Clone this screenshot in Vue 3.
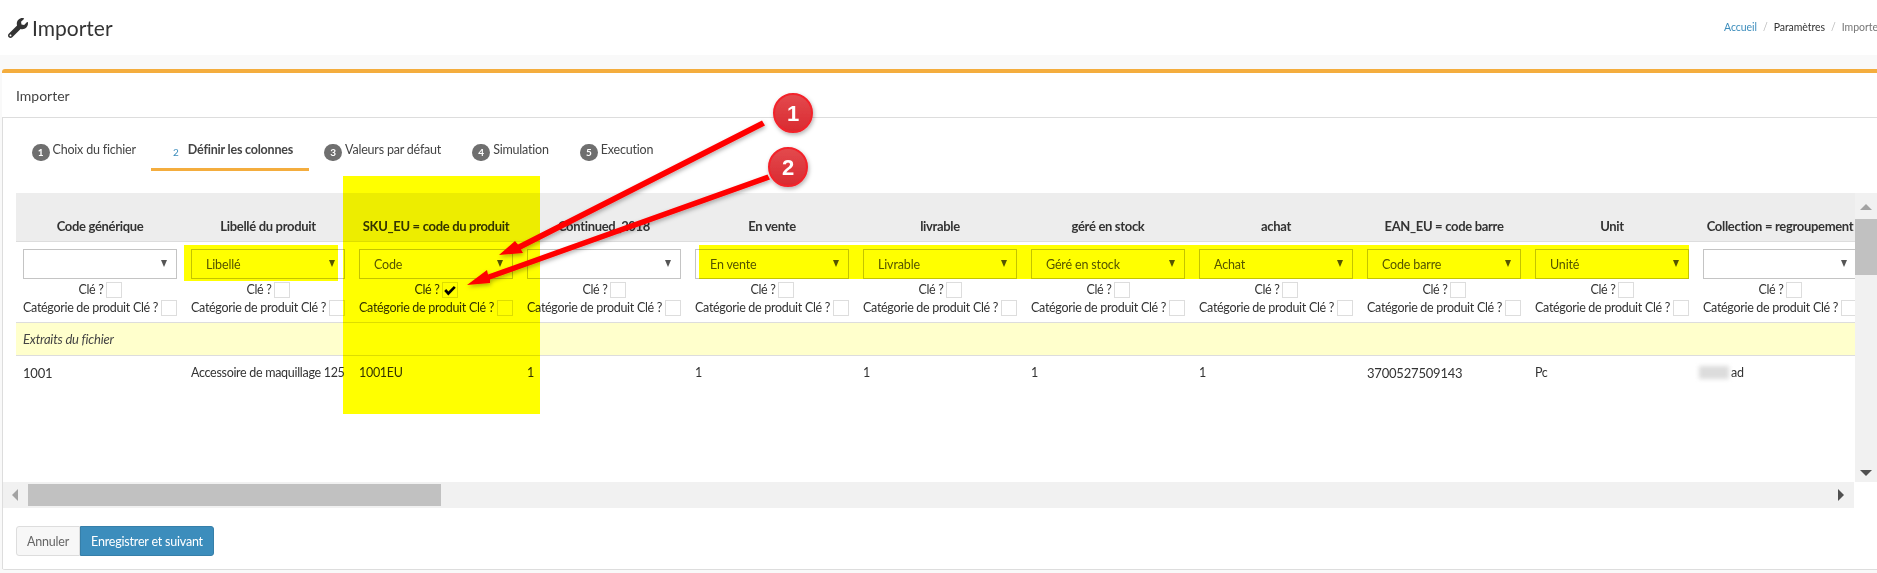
<script setup>
const tabs = [
  { n: 1, label: 'Choix du fichier' },
  { n: 2, label: 'Définir les colonnes', active: true },
  { n: 3, label: 'Valeurs par défaut' },
  { n: 4, label: 'Simulation' },
  { n: 5, label: 'Execution' },
]
const columns = [
  { head: 'Code générique', value: '', cell: '1001', digits: true },
  { head: 'Libellé du produit', value: 'Libellé', cell: 'Accessoire de maquillage 125' },
  { head: 'SKU_EU = code du produit', value: 'Code', cell: '1001EU', key: true },
  { head: 'Continued_2018', value: '', cell: '1' },
  { head: 'En vente', value: 'En vente', cell: '1' },
  { head: 'livrable', value: 'Livrable', cell: '1' },
  { head: 'géré en stock', value: 'Géré en stock', cell: '1' },
  { head: 'achat', value: 'Achat', cell: '1' },
  { head: 'EAN_EU = code barre', value: 'Code barre', cell: '3700527509143', digits: true },
  { head: 'Unit', value: 'Unité', cell: 'Pc' },
  { head: 'Collection = regroupement', value: '', cell: 'ad', blur: true },
]
const marks = [
  { left: 343, top: 176, width: 197, height: 238 },
  { left: 184, top: 245, width: 154, height: 36 },
  { left: 699, top: 245, width: 990, height: 34 },
]
</script>

<template>
  <div class="page">
    <header class="top">
      <h1 class="title">
        <svg class="wrench" viewBox="0 0 512 512" width="20" height="20"><path d="M507.730 109.100c-2.240-9.030-13.540-12.090-20.120-5.510l-74.360 74.360-67.880-11.310-11.310-67.880 74.360-74.360c6.620-6.620 3.430-17.900-5.660-20.160-47.380-11.740-99.550.91-136.580 37.930-39.640 39.640-50.550 97.100-34.050 147.200L18.740 402.760c-24.990 24.990-24.990 65.510 0 90.500 24.990 24.990 65.510 24.990 90.500 0l213.210-213.210c50.120 16.710 107.470 5.680 147.370-34.220 37.070-37.070 49.700-89.320 37.910-136.730zM64 472c-13.250 0-24-10.750-24-24 0-13.260 10.750-24 24-24s24 10.740 24 24c0 13.250-10.750 24-24 24z" fill="#333"/></svg>
        <span>Importer</span>
      </h1>
      <nav class="crumbs">
        <a>Accueil</a><i>/</i><b>Paramètres</b><i>/</i><em>Importer</em>
      </nav>
    </header>
    <div class="strip"></div>
    <section class="panel">
      <div class="heading">Importer</div>
      <div class="body">
        <ul class="tabs">
          <li v-for="t in tabs" :key="t.n" :class="['tab', { active: t.active }]">
            <span class="badge">{{ t.n }}</span><span class="tab-label">{{ t.label }}</span>
          </li>
        </ul>
        <div class="scroller">
          <div class="viewport">
            <div class="grid">
              <div v-for="c in columns" :key="c.head" class="col">
                <div class="c-head">{{ c.head }}</div>
                <div class="c-filter">
                  <div class="select"><span>{{ c.value }}</span><i class="caret"></i></div>
                  <div class="line center">Clé ?<span :class="['box', { on: c.key }]"><svg v-if="c.key" viewBox="0 0 16 16" width="14" height="14"><path d="M2.500 8l3.600 4L13.500 4.500" fill="none" stroke="#000" stroke-width="3"/></svg></span></div>
                  <div class="line second">Catégorie de produit Clé ?<span class="box"></span></div>
                </div>
                <div class="c-band"></div>
                <div :class="['c-data', { digits: c.digits }]"><span v-if="c.blur" class="smudge"></span>{{ c.cell }}</div>
              </div>
            </div>
            <div class="extract">Extraits du fichier</div>
          </div>
          <div class="vbar">
            <i class="tri up"></i>
            <div class="vthumb"></div>
            <i class="tri down"></i>
          </div>
        </div>
        <div class="hbar">
          <i class="tri left"></i>
          <div class="hthumb"></div>
          <i class="tri right"></i>
        </div>
        <div class="actions">
          <button class="btn ghost">Annuler</button>
          <button class="btn primary">Enregistrer et suivant</button>
        </div>
      </div>
    </section>
    <div v-for="(m, i) in marks" :key="i" class="mark" :style="{ left: m.left + 'px', top: m.top + 'px', width: m.width + 'px', height: m.height + 'px' }"></div>
    <svg class="arrows" width="1877" height="573" viewBox="0 0 1877 573">
      <defs>
        <filter id="sh" x="-20%" y="-20%" width="140%" height="140%"><feDropShadow dx="1" dy="2" stdDeviation="2" flood-color="#000" flood-opacity=".3"/></filter>
        <linearGradient id="dot" x1="0" y1="0" x2="0" y2="1"><stop offset="0" stop-color="#e34a4e"/><stop offset="1" stop-color="#d92a30"/></linearGradient>
      </defs>
      <g filter="url(#sh)">
        <path d="M762 120.500 L518 244.500 L515 241 L499 255 L523 253 L521 249.500 L765 125.500 Z" fill="#f00"/>
        <path d="M767.500 174.500 L488 274.500 L487 270 L467 285 L490 283 L490 279.500 L770 179.500 Z" fill="#f00"/>
        <circle cx="793" cy="113" r="19" fill="url(#dot)" stroke="#f3222a" stroke-width="2"/>
        <circle cx="788" cy="167" r="19" fill="url(#dot)" stroke="#f3222a" stroke-width="2"/>
      </g>
      <text x="793" y="121" class="num">1</text>
      <text x="788" y="175" class="num">2</text>
    </svg>
  </div>
</template>

<style>
html, body { margin: 0; background: #fff; }
</style>

<style scoped>
.page { position: relative; width: 1877px; height: 573px; overflow: hidden; font-family: "Lato", "Liberation Sans", sans-serif; font-size: 13px; letter-spacing: -0.2px; color: #333; background: #f9f9f9; }
.top { height: 55px; background: #fff; display: flex; justify-content: space-between; align-items: center; padding-left: 8px; }
.title { margin: 0; display: flex; align-items: center; gap: 4px; font-size: 21px; font-weight: 400; letter-spacing: 0; color: #333; }
.wrench { display: block; }
.crumbs { display: flex; width: 153px; flex: none; overflow: hidden; white-space: nowrap; font-size: 10.500px; letter-spacing: -0.05px; margin-top: -1px; }
.crumbs a { color: #3c8dbc; }
.crumbs i { color: #bbb; font-style: normal; margin: 0 6px; }
.crumbs b { font-weight: 400; color: #333; }
.crumbs em { font-style: normal; color: #777; }
.strip { height: 14px; }
.panel { margin-left: 2px; height: 501px; background: #fff; border-top: 4px solid #f4ad3e; border-radius: 3px 0 0 3px; border-bottom: 1px solid #ddd; box-sizing: border-box; display: flex; flex-direction: column; }
.heading { height: 45px; flex: none; box-sizing: border-box; padding: 0 14px; display: flex; align-items: center; color: #444; font-size: 14px; letter-spacing: 0; border-bottom: 1px solid #ddd; }
.body { flex: 1; border-left: 1px solid #ddd; display: flex; flex-direction: column; }
.tabs { list-style: none; margin: 0; padding: 0 0 0 13px; height: 53px; flex: none; display: flex; box-sizing: border-box; }
.tab { height: 53px; box-sizing: border-box; padding: 24px 15.500px 0; display: flex; align-items: flex-start; color: #444; font-size: 12.500px; letter-spacing: -0.2px; line-height: 16px; }
.tab.active { border-bottom: 3px solid #f4ad3e; font-weight: 700; letter-spacing: -0.2px; }
.badge { width: 18px; height: 17px; border-radius: 9px; background: #6f6f6f; color: #fff; font-size: 10px; font-weight: 700; line-height: 17px; text-align: center; margin-right: 3px; margin-top: 2px; flex: none; }
.tab.active .badge { background: none; color: #3c8dbc; font-weight: 400; }
.scroller { margin-top: 22px; height: 289px; flex: none; display: flex; }
.viewport { position: relative; width: 1852px; flex: none; overflow: hidden; padding-left: 13px; box-sizing: border-box; }
.grid { display: flex; width: max-content; position: relative; z-index: 1; }
.col { width: 168px; flex: none; }
.c-head { height: 49px; box-sizing: border-box; padding-top: 24px; line-height: 18px; text-align: center; background: #ededed; border-bottom: 1px solid #ddd; font-weight: 700; letter-spacing: -0.32px; white-space: nowrap; }
.c-filter { height: 81px; box-sizing: border-box; padding: 7px 7px 0; border-bottom: 1px solid #ddd; white-space: nowrap; font-size: 12.500px; letter-spacing: -0.3px; }
.select { height: 30px; box-sizing: border-box; border: 1px solid #c4c4c4; display: flex; align-items: center; justify-content: space-between; padding: 0 9px 0 14px; color: #555; letter-spacing: -0.15px; }
.caret { width: 0; height: 0; margin-top: -2px; border-left: 3.500px solid transparent; border-right: 3.500px solid transparent; border-top: 7px solid #555; }
.line { height: 16px; margin-top: 3px; display: flex; align-items: center; justify-content: space-between; line-height: 16px; }
.line.second { margin-top: 2px; }
.line.center { justify-content: center; }
.box { display: inline-block; flex: none; width: 16px; height: 16px; box-sizing: border-box; border: 1px solid #ddd; background: #fff; margin-left: 2px; }
.box.on svg { display: block; margin: 0; }
.c-band { height: 32px; }
.c-data { height: 34px; padding: 0 7px; display: flex; align-items: center; white-space: nowrap; box-sizing: border-box; border-top: 1px solid #ddd; font-size: 12.500px; letter-spacing: -0.3px; }
.c-data.digits { font-size: 13px; letter-spacing: -0.2px; }
.smudge { display: inline-block; flex: none; width: 30px; height: 13px; background: #dcdcdc; filter: blur(2px); margin: 0 2px 0 -4px; }
.extract { position: absolute; left: 13px; right: 0; top: 130px; height: 32px; box-sizing: border-box; padding-left: 7px; display: flex; align-items: center; background: #ffffcc; font-style: italic; color: #444; }
.vbar { width: 22px; flex: none; background: #f1f1f1; position: relative; }
.vthumb { position: absolute; left: 0; right: 0; top: 26px; height: 56px; background: #c1c1c1; }
.hbar { height: 26px; width: 1851px; flex: none; background: #f1f1f1; position: relative; }
.hthumb { position: absolute; left: 25px; top: 2px; width: 413px; height: 22px; background: #c1c1c1; }
.tri { position: absolute; width: 0; height: 0; }
.tri.up { top: 11px; left: 5px; border-left: 6px solid transparent; border-right: 6px solid transparent; border-bottom: 6px solid #a3a3a3; }
.tri.down { bottom: 6px; left: 5px; border-left: 6px solid transparent; border-right: 6px solid transparent; border-top: 6px solid #505050; }
.tri.left { top: 7px; left: 9px; border-top: 6px solid transparent; border-bottom: 6px solid transparent; border-right: 6px solid #a3a3a3; }
.tri.right { top: 7px; right: 10px; border-top: 6px solid transparent; border-bottom: 6px solid transparent; border-left: 6px solid #505050; }
.actions { display: flex; padding: 18px 0 0 13px; }
.btn { height: 30px; box-sizing: border-box; font: inherit; font-size: 12.500px; letter-spacing: -0.2px; padding: 0; }
.ghost { width: 64px; background: #f7f7f7; color: #666; border: 1px solid #ddd; border-radius: 3px 0 0 3px; }
.primary { width: 134px; background: #3c8dbc; color: #fff; border: 1px solid #367fa9; border-radius: 0 3px 3px 0; }
.mark { position: absolute; background: #ffff00; mix-blend-mode: multiply; z-index: 2; pointer-events: none; }
.arrows { position: absolute; left: 0; top: 0; z-index: 3; pointer-events: none; }
.num { font-family: "Liberation Sans", sans-serif; font-size: 22px; font-weight: 700; fill: #fff; text-anchor: middle; letter-spacing: 0; }
</style>
